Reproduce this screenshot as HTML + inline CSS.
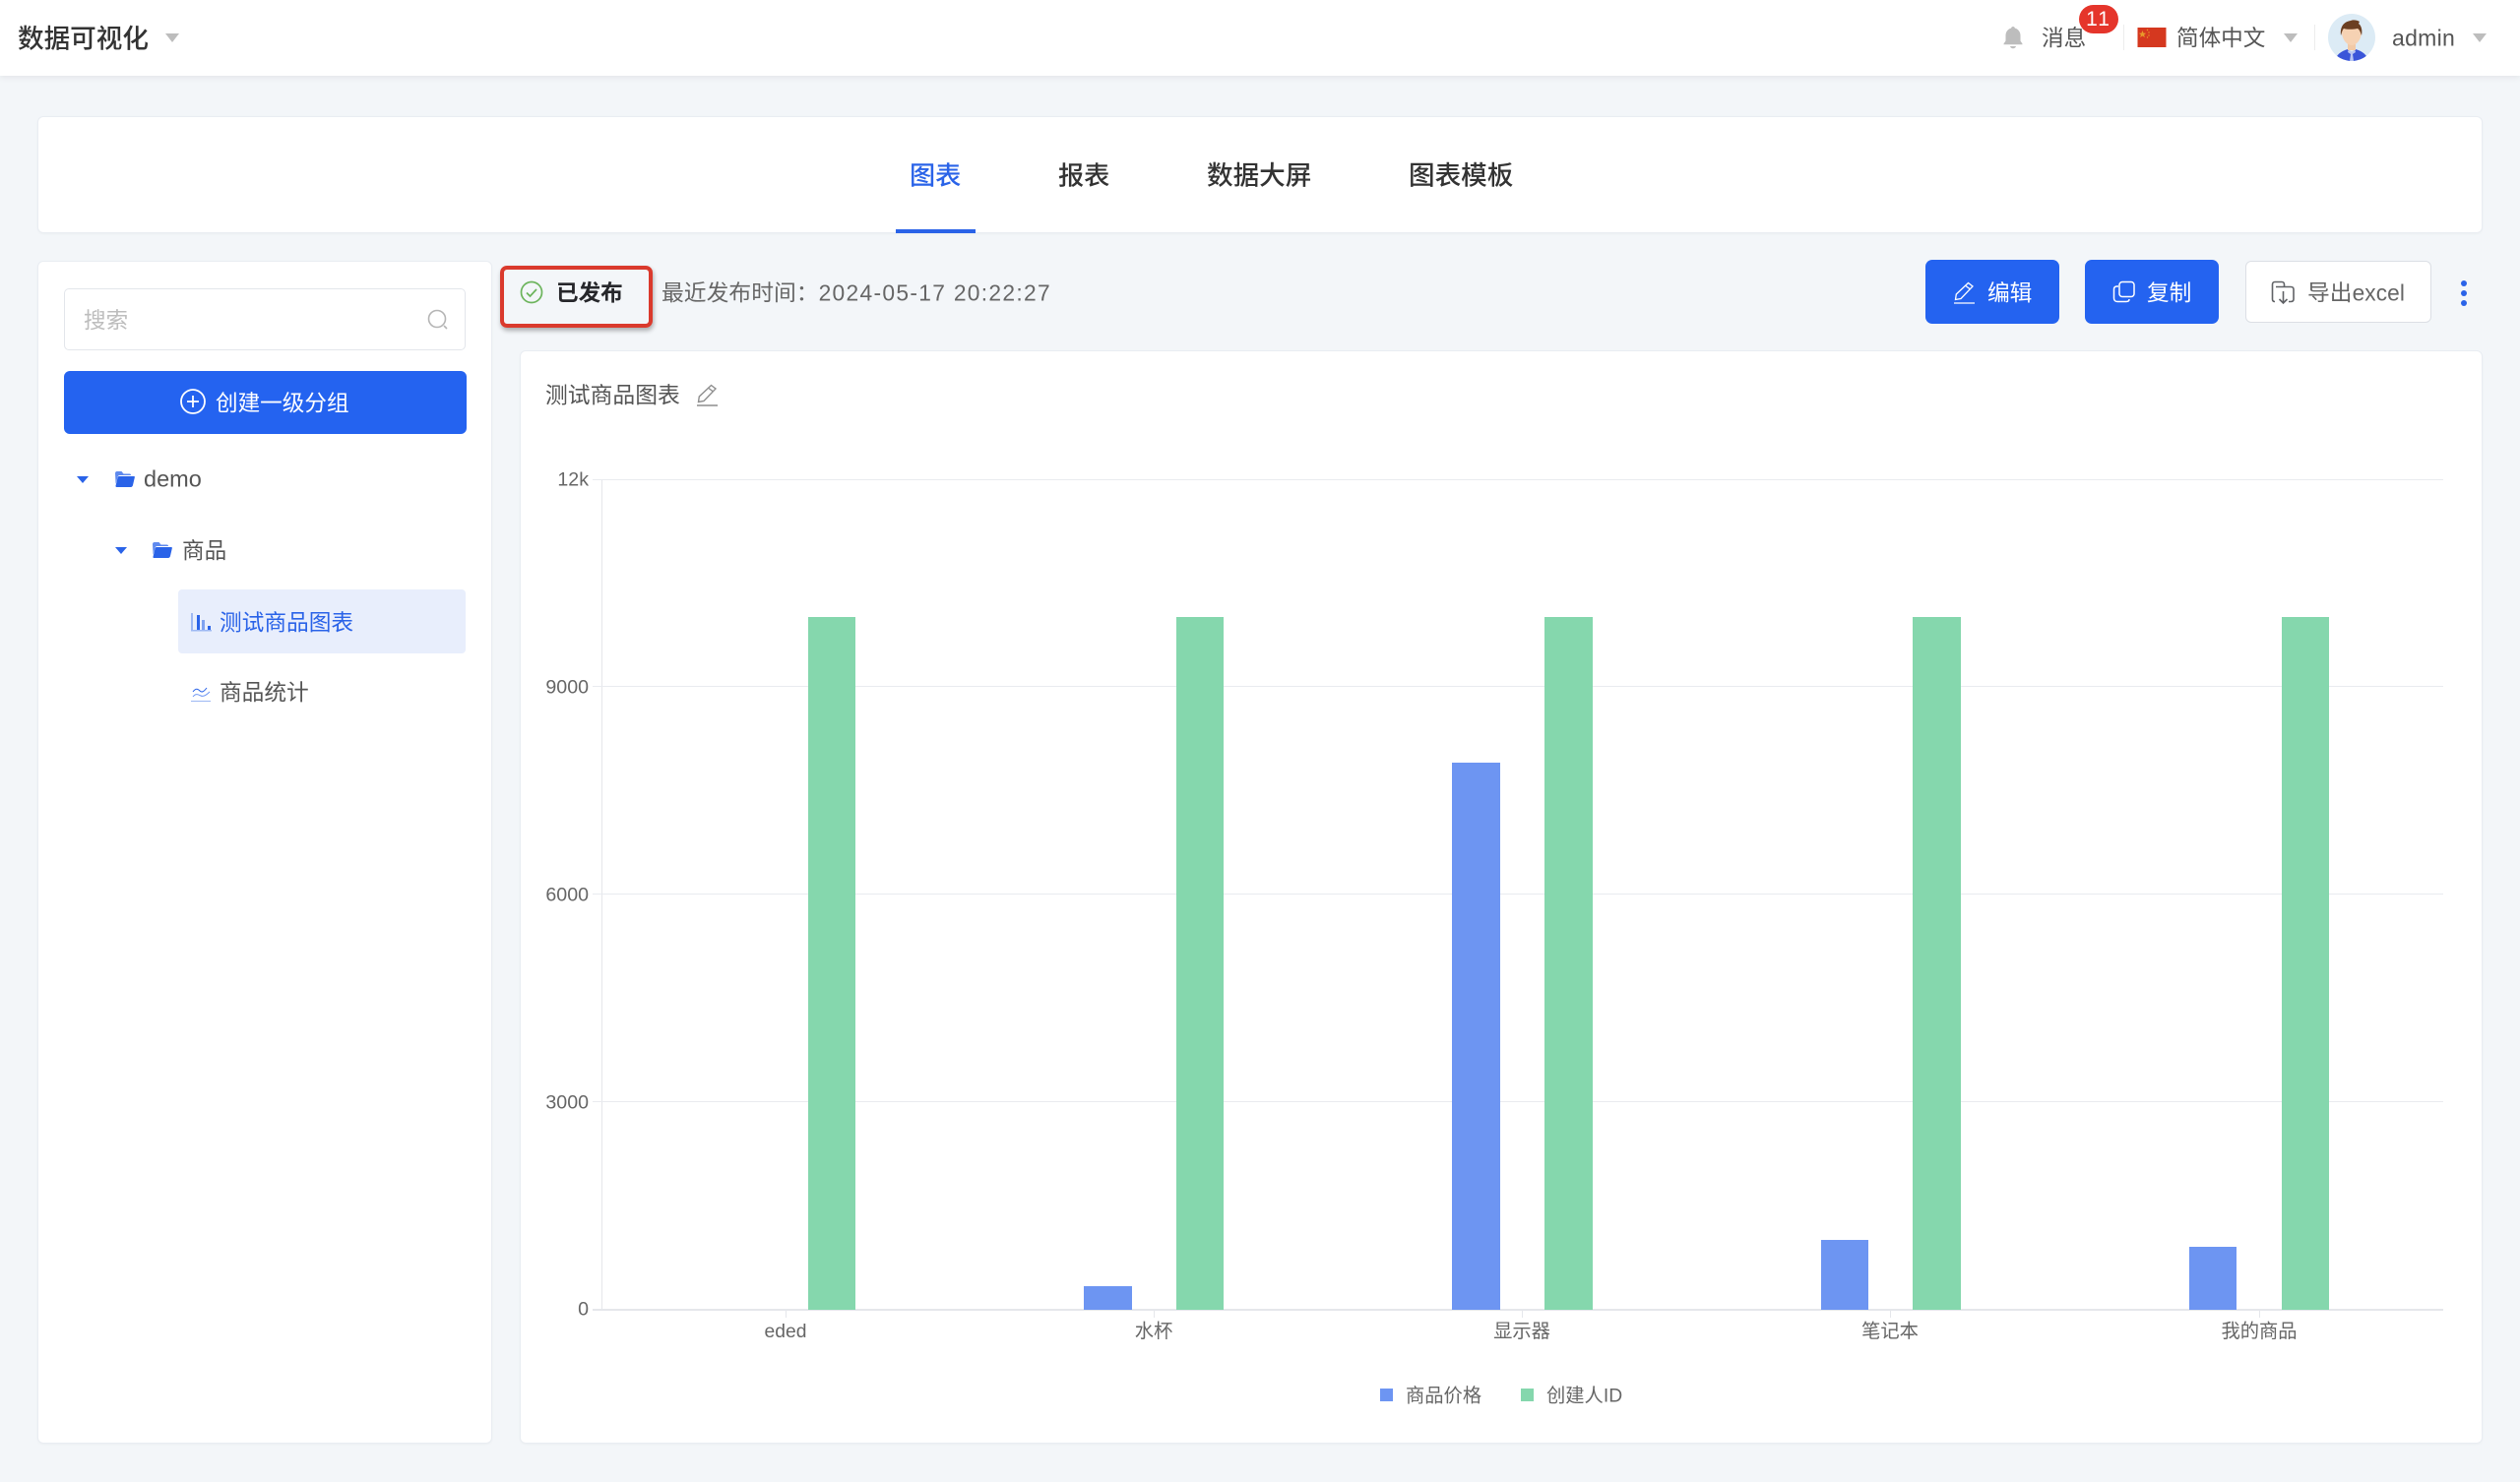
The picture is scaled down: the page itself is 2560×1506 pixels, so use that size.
<!DOCTYPE html>
<html lang="zh-CN">
<head>
<meta charset="utf-8">
<title>数据可视化</title>
<style>
*{box-sizing:border-box;margin:0;padding:0}
html,body{width:2560px;height:1506px;overflow:hidden;background:#f3f6f9}
body{position:relative;font-family:"Liberation Sans","Noto Sans CJK SC",sans-serif;color:#606266}
.a{position:absolute}
.t{position:absolute;white-space:nowrap;line-height:40px;height:40px;font-size:23px;transform:translateY(1.5px)}
.card{position:absolute;background:#fff;border:1px solid #e9edf2;border-radius:6px;box-shadow:0 1px 2px rgba(0,0,0,.03)}
.btn{position:absolute;background:#2463f0;border-radius:7px}
.tri{position:absolute;width:0;height:0;border-style:solid;border-color:#bdbdbd transparent transparent;border-width:9px 7px 0}
.tri.b{border-color:#2a63e8 transparent transparent;border-width:7px 6px 0}
.y{position:absolute;right:1962px;width:60px;text-align:right;font-size:19.600px;line-height:24px;height:24px;color:#666;white-space:nowrap;transform:translateY(1.5px)}
.x{position:absolute;width:200px;text-align:center;font-size:19.300px;line-height:24px;height:24px;color:#666;top:1342px;white-space:nowrap}
.bar{position:absolute}
.bl{background:#6d95f2}.gr{background:#85d7ad}
.grid{position:absolute;left:602px;width:1880px;height:1px;background:#e9ebef}
.tk{position:absolute;top:1331px;width:1px;height:8px;background:#e5e7eb}
</style>
</head>
<body>

<!-- header -->
<div class="a" style="left:0;top:0;width:2560px;height:77px;background:#fff;box-shadow:0 2px 6px rgba(0,0,0,.07)"></div>
<div class="t" style="left:18px;top:18px;font-size:26.600px;font-weight:500;color:#333">数据可视化</div>
<div class="tri" style="left:168px;top:34px"></div>

<svg class="a" style="left:2033px;top:25px" width="24" height="26" viewBox="0 0 24 26"><path d="M12 2c1 0 1.800.7 1.900 1.600C17.400 4.500 19.500 7.500 19.500 11v5.500l2 3v.8H2.500v-.8l2-3V11c0-3.500 2.100-6.500 5.600-7.400C10.200 2.700 11 2 12 2z" fill="#bdbdbd"/><path d="M9 22h6c-.3 1.400-1.500 2.300-3 2.300S9.300 23.400 9 22z" fill="#bdbdbd"/></svg>
<div class="t" style="left:2074px;top:18px;color:#555;font-size:22.600px">消息</div>
<div class="a" style="left:2112px;top:5px;width:40px;height:29px;border-radius:15px;background:#e5352b;color:#fff;font-size:21px;line-height:30px;text-align:center;letter-spacing:2px">11</div>
<div class="a" style="left:2157px;top:25px;width:1px;height:26px;background:#ececec"></div>
<svg class="a" style="left:2171px;top:28px" width="30" height="20" viewBox="0 0 29 20"><rect width="29" height="20" fill="#d5381f"/><path d="M5 3l1 2.600 2.700.1-2.100 1.700.8 2.600L5 8.500 2.600 10l.8-2.600L1.300 5.700 4 5.600z" fill="#e89a2a"/><circle cx="10" cy="2.500" r=".7" fill="#e89a2a"/><circle cx="11.500" cy="5" r=".7" fill="#e89a2a"/><circle cx="11.500" cy="8" r=".7" fill="#e89a2a"/><circle cx="10" cy="10" r=".7" fill="#e89a2a"/></svg>
<div class="t" style="left:2211px;top:18px;color:#555;font-size:22.600px">简体中文</div>
<div class="tri" style="left:2320px;top:34px"></div>
<div class="a" style="left:2351px;top:25px;width:1px;height:26px;background:#ececec"></div>
<svg class="a" style="left:2365px;top:14px" width="48" height="48" viewBox="0 0 48 48">
<defs><clipPath id="av"><circle cx="24" cy="24" r="24"/></clipPath></defs>
<g clip-path="url(#av)"><rect width="48" height="48" fill="#dcebf5"/>
<path d="M7 48c1-6 6-10 13-12l4 3 4-3c7 2 12 6 13 12z" fill="#3a55d9"/>
<path d="M21 36l3 3 3-3 1 3-3 2 1 7h-4l1-7-3-2z" fill="#b9c6f2"/>
<rect x="20" y="27" width="8" height="10" fill="#f2c9a6"/>
<path d="M14 18c0-6 4-9 10-9s10 3 10 9c0 8-5 14-10 14s-10-6-10-14z" fill="#f6d2b3"/>
<path d="M13 22c-1-9 3-14 10-15 2-1 6-1 9 1l-1 2c3 2 4 7 3 12-1-3-2-6-4-7-5 1-11 1-14 0-2 2-2 5-3 7z" fill="#6b3f22"/></g></svg>
<div class="t" style="left:2430px;top:17px;color:#555;font-size:23px;letter-spacing:.3px">admin</div>
<div class="tri" style="left:2512px;top:34px"></div>

<!-- tabs card -->
<div class="card" style="left:38px;top:118px;width:2484px;height:119px"></div>
<div class="t" style="left:924px;top:157px;font-size:26.200px;font-weight:500;color:#2a63e8">图表</div>
<div class="t" style="left:1075px;top:157px;font-size:26.200px;font-weight:500;color:#333">报表</div>
<div class="t" style="left:1226px;top:157px;font-size:26.600px;font-weight:500;color:#333">数据大屏</div>
<div class="t" style="left:1431px;top:157px;font-size:26.600px;font-weight:500;color:#333">图表模板</div>
<div class="a" style="left:910px;top:233px;width:81px;height:4px;background:#2a63e8"></div>

<!-- sidebar -->
<div class="card" style="left:38px;top:265px;width:462px;height:1202px"></div>
<div class="a" style="left:65px;top:293px;width:408px;height:63px;border:1px solid #e3e6eb;border-radius:5px;background:#fff"></div>
<div class="t" style="left:85px;top:305px;color:#bdbdbd;font-size:22.600px">搜索</div>
<svg class="a" style="left:433px;top:313px" width="24" height="24" viewBox="0 0 24 24" fill="none" stroke="#b5b5b5" stroke-width="1.600"><circle cx="11" cy="11" r="8.500"/><path d="M18 18l3 3"/></svg>
<div class="btn" style="left:65px;top:377px;width:409px;height:64px;border-radius:6px"></div>
<svg class="a" style="left:182px;top:394px" width="28" height="28" viewBox="0 0 28 28" fill="none" stroke="#fff" stroke-width="1.800"><circle cx="14" cy="14" r="12"/><path d="M14 8v12M8 14h12"/></svg>
<div class="t" style="left:219px;top:389px;color:#fff;font-size:22.600px">创建一级分组</div>

<div class="tri b" style="left:78px;top:484px"></div>
<svg class="a" style="left:116px;top:478px" width="21" height="18" viewBox="0 0 21 18"><path d="M1 3c0-1 .6-2 2-2h4.500l2 2.500h6c1 0 1.500.5 1.500 1.500H6C4.500 5 3.800 5.800 3.500 7L1.600 14z" fill="#2a63e8" opacity=".75"/><path d="M5 6h15c.8 0 1 .6.8 1.300L19 15c-.2 1-1 2-2.200 2H2.500c-.8 0-1.200-.6-1-1.300L3.500 7.500C3.800 6.500 4.200 6 5 6z" fill="#2a63e8"/></svg>
<div class="t" style="left:146px;top:465px;color:#555;font-size:23.500px">demo</div>

<div class="tri b" style="left:117px;top:556px"></div>
<svg class="a" style="left:154px;top:550px" width="21" height="18" viewBox="0 0 21 18"><path d="M1 3c0-1 .6-2 2-2h4.500l2 2.500h6c1 0 1.500.5 1.500 1.500H6C4.500 5 3.800 5.800 3.500 7L1.600 14z" fill="#2a63e8" opacity=".75"/><path d="M5 6h15c.8 0 1 .6.8 1.300L19 15c-.2 1-1 2-2.200 2H2.500c-.8 0-1.200-.6-1-1.300L3.500 7.500C3.800 6.500 4.200 6 5 6z" fill="#2a63e8"/></svg>
<div class="t" style="left:185px;top:539px;color:#555;font-size:22.600px">商品</div>

<div class="a" style="left:181px;top:599px;width:292px;height:65px;background:#e8eefc;border-radius:4px"></div>
<svg class="a" style="left:194px;top:622px" width="21" height="20" viewBox="0 0 21 20"><rect x="0" y="1" width="2" height="18" fill="#9db8f3"/><rect x="6" y="3" width="3" height="15" fill="#2a63e8"/><rect x="11" y="8" width="3" height="10" fill="#7fa2f0"/><rect x="17" y="14" width="3" height="4" fill="#2a63e8"/><rect x="0" y="18" width="21" height="1.500" fill="#9db8f3"/></svg>
<div class="t" style="left:223px;top:611px;color:#2a63e8;font-size:22.700px">测试商品图表</div>

<svg class="a" style="left:194px;top:696px" width="21" height="18" viewBox="0 0 21 18" fill="none"><path d="M2 7c3-4 5-3 7-1s4 1 7-3" stroke="#2a63e8" stroke-width="1"/><path d="M2 12c3-4 6-2 8-1s5 0 9-4" stroke="#6d95f2" stroke-width="1"/><path d="M0 16.500h20" stroke="#9db8f3" stroke-width="1"/></svg>
<div class="t" style="left:223px;top:682px;color:#555;font-size:22.700px">商品统计</div>

<!-- status -->
<div class="a" style="left:508px;top:270px;width:155px;height:63px;border:4px solid #da3a2d;border-radius:7px;box-shadow:1px 3px 5px rgba(0,0,0,.3)"></div>
<svg class="a" style="left:528px;top:285px" width="24" height="24" viewBox="0 0 24 24" fill="none" stroke="#6cb45c" stroke-width="1.700"><circle cx="12" cy="12" r="10.500"/><path d="M7 12.500l3.500 3.500L17 9"/></svg>
<div class="t" style="left:565px;top:277px;font-size:22.600px;font-weight:700;color:#26272b">已发布</div>
<div class="t" style="left:672px;top:276px;color:#666;font-size:22.800px">最近发布时间：<span style="letter-spacing:1.300px">2024-05-17 20:22:27</span></div>

<!-- actions -->
<div class="btn" style="left:1956px;top:264px;width:136px;height:65px"></div>
<svg class="a" style="left:1984px;top:285px" width="23" height="24" viewBox="0 0 23 24" fill="none" stroke="#fff" stroke-width="1.300"><path d="M15.500 2.500l4.500 3.500L8 18.500l-5.500 1 .8-5.500z"/><path d="M13 5.500l4.500 3.500"/><path d="M1 23h21"/></svg>
<div class="t" style="left:2019px;top:276px;color:#fff;font-size:22.700px">编辑</div>
<div class="btn" style="left:2118px;top:264px;width:136px;height:65px"></div>
<svg class="a" style="left:2146px;top:285px" width="23" height="24" viewBox="0 0 23 24" fill="none" stroke="#fff" stroke-width="1.500"><rect x="7" y="1.500" width="15" height="15" rx="3"/><path d="M6 6H4.500C2.500 6 1.500 7.200 1.500 9v9c0 2 1.200 3.500 3.500 3.500h9c2 0 3-1 3-2.500"/></svg>
<div class="t" style="left:2181px;top:276px;color:#fff;font-size:22.700px">复制</div>
<div class="a" style="left:2281px;top:265px;width:189px;height:63px;background:#fff;border:1.500px solid #dcdfe5;border-radius:6px"></div>
<svg class="a" style="left:2307px;top:285px" width="25" height="25" viewBox="0 0 25 25" fill="none" stroke="#606266" stroke-width="1.600"><path d="M4 21.500c-2 0-2.500-1-2.500-2.500V4C1.500 2.500 2.500 1.500 4 1.500h7c1.500 0 2.500 1 2.500 2.500v2"/><path d="M5 6.500h15c2 0 3 1 3 2.500v10c0 1.500-1 2.500-3 2.500h-2"/><path d="M12.500 11v12M8.500 19l4 4 4-4"/></svg>
<div class="t" style="left:2344px;top:276px;color:#666;font-size:22.700px;letter-spacing:.1px">导出excel</div>
<div class="a" style="left:2500px;top:285px;width:6px;height:6px;border-radius:50%;background:#2a63e8"></div>
<div class="a" style="left:2500px;top:295px;width:6px;height:6px;border-radius:50%;background:#2a63e8"></div>
<div class="a" style="left:2500px;top:305px;width:6px;height:6px;border-radius:50%;background:#2a63e8"></div>

<!-- chart card -->
<div class="card" style="left:528px;top:356px;width:1994px;height:1111px"></div>
<div class="t" style="left:554px;top:380px;color:#555;font-size:22.800px">测试商品图表</div>
<svg class="a" style="left:707px;top:389px" width="23" height="24" viewBox="0 0 23 24" fill="none" stroke="#8e8e8e" stroke-width="1.400"><path d="M15.500 2.500l4.500 3.500L8 18.500l-5.500 1 .8-5.500z"/><path d="M13 5.500l4.500 3.500"/><path d="M1 23h21"/></svg>

<div class="a" style="left:611px;top:487px;width:1px;height:844px;background:#e5e7eb"></div>
<div class="grid" style="top:487px"></div>
<div class="grid" style="top:697px"></div>
<div class="grid" style="top:908px"></div>
<div class="grid" style="top:1119px"></div>
<div class="a" style="left:602px;top:1330px;width:1880px;height:2px;background:#e5e7eb"></div>

<div class="y" style="top:474px">12k</div>
<div class="y" style="top:685px">9000</div>
<div class="y" style="top:896px">6000</div>
<div class="y" style="top:1107px">3000</div>
<div class="y" style="top:1317px">0</div>

<div class="tk" style="left:798px"></div><div class="tk" style="left:1172px"></div><div class="tk" style="left:1546px"></div><div class="tk" style="left:1920px"></div><div class="tk" style="left:2295px"></div>

<div class="bar gr" style="left:821px;top:627px;width:48px;height:704px"></div>
<div class="bar bl" style="left:1101px;top:1307px;width:49px;height:24px"></div>
<div class="bar gr" style="left:1195px;top:627px;width:48px;height:704px"></div>
<div class="bar bl" style="left:1475px;top:775px;width:49px;height:556px"></div>
<div class="bar gr" style="left:1569px;top:627px;width:49px;height:704px"></div>
<div class="bar bl" style="left:1850px;top:1260px;width:48px;height:71px"></div>
<div class="bar gr" style="left:1943px;top:627px;width:49px;height:704px"></div>
<div class="bar bl" style="left:2224px;top:1267px;width:48px;height:64px"></div>
<div class="bar gr" style="left:2318px;top:627px;width:48px;height:704px"></div>

<div class="x" style="left:698px">eded</div>
<div class="x" style="left:1072px">水杯</div>
<div class="x" style="left:1446px">显示器</div>
<div class="x" style="left:1820px">笔记本</div>
<div class="x" style="left:2195px">我的商品</div>

<div class="a bl" style="left:1402px;top:1411px;width:13px;height:13px"></div>
<div class="t" style="left:1428px;top:1398px;font-size:19.300px;color:#666">商品价格</div>
<div class="a gr" style="left:1545px;top:1411px;width:13px;height:13px"></div>
<div class="t" style="left:1571px;top:1398px;font-size:19.300px;color:#666">创建人ID</div>

</body>
</html>
